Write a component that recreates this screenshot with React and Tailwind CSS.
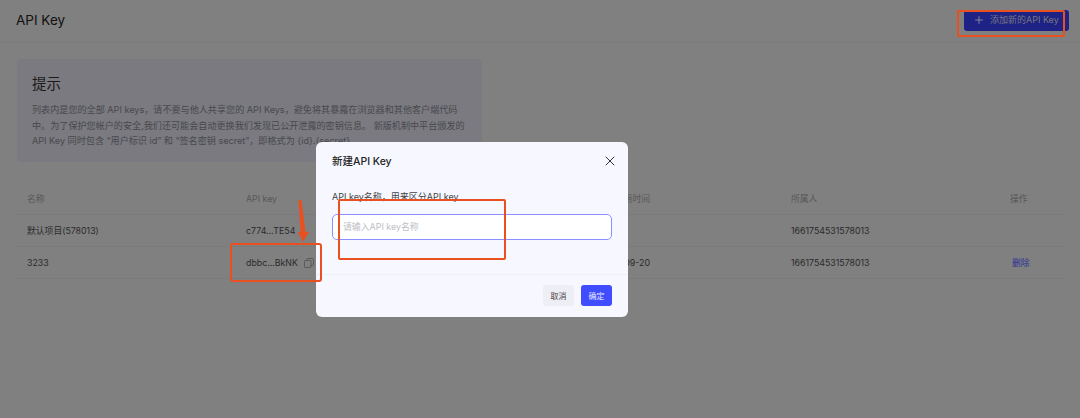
import { Plus, X } from 'lucide-react';

const font = 'font-["Inter","Noto_Sans_CJK_SC",sans-serif]';

const rows = [
  { name: '默认项目(578013)', apiKey: 'c774...TE54', time: '', owner: '1661754531578013' },
  { name: '3233', apiKey: 'dbbc...BkNK', time: '2023-09-20', owner: '1661754531578013', canDelete: true, copy: true },
];

const gridCols = 'grid grid-cols-[219px_350px_195px_219px_1fr] items-center pl-[10px]';

const CopyIcon = () => (
  <svg width="10" height="10" viewBox="0 0 10 10" fill="none" stroke="#505050" strokeWidth="0.8">
    <rect x="0.5" y="2.5" width="6.5" height="7" rx="0.8" />
    <path d="M3 2.5 V1.3 Q3 0.5 3.8 0.5 H8.7 Q9.5 0.5 9.5 1.3 V6.7 Q9.5 7.5 8.7 7.5 H7" />
  </svg>
);

const App = () => {
  return (
    <div className={`relative h-[418px] w-[1080px] overflow-hidden bg-[#808080] ${font}`}>
      {/* Header */}
      <div className="flex h-[43px] items-center justify-between border-b border-[#7b7b7b] pl-[16px] pr-[11px]">
        <h1 className="text-[13.5px] leading-none text-[#111111]">API Key</h1>
        <button className="mb-[2px] flex h-[21px] w-[105px] items-center gap-[5px] rounded-[3px] bg-[#1e2284] pl-[9px] text-[9px] text-[#77777f]">
          <Plus className="h-[12px] w-[12px] text-[#a0a0a8]" strokeWidth={1.5} />
          <span>添加新的API Key</span>
        </button>
      </div>

      {/* Hint */}
      <div className="ml-[17px] mt-[16px] h-[103px] w-[465px] rounded-[4px] bg-[#7a7a80] pl-[15px] pt-[15px]">
        <h2 className="text-[14.5px] leading-[20px] text-[#1a1a1a]">提示</h2>
        <p className="mt-[8px] w-[433px] text-[9.1px] leading-[15.5px] text-[#48484c]">
          列表内是您的全部 API keys，请不要与他人共享您的 API Keys，避免将其暴露在浏览器和其他客户端代码中。为了保护您帐户的安全,我们还可能会自动更换我们发现已公开泄露的密钥信息。 新版机制中平台颁发的 API Key 同时包含 “用户标识 id” 和 “签名密钥 secret”，即格式为 {'{id}.{secret}'} 。
        </p>
      </div>

      {/* Table */}
      <div className="mx-[17px] mt-[22px] text-[8.8px]">
        <div className={`${gridCols} h-[31px] border-b border-[#7b7b7b] text-[#575757]`}>
          <span>名称</span>
          <span>API key</span>
          <span className="w-[54px] text-right">最近使用时间</span>
          <span>所属人</span>
          <span>操作</span>
        </div>
        {rows.map((row) => (
          <div key={row.apiKey} className={`${gridCols} h-[32px] border-b border-[#7b7b7b] text-[#2b2b2b]`}>
            <span>{row.name}</span>
            <span className="flex items-center gap-[6px]">
              {row.apiKey}
              {row.copy && <CopyIcon />}
            </span>
            <span className="w-[54px] text-right">{row.time}</span>
            <span>{row.owner}</span>
            <span className="pl-[2px] text-[#2a2f96]">{row.canDelete ? '删除' : ''}</span>
          </div>
        ))}
      </div>

      {/* Modal */}
      <div className="absolute left-[316px] top-[142px] flex h-[175px] w-[312px] flex-col rounded-[6px] bg-[#f6f7ff]">
        <div className="flex items-start justify-between pl-[16px] pr-[10px] pt-[11px]">
          <h3 className="mt-[2px] text-[10.5px] font-medium leading-[14px] text-[#222222]">新建API Key</h3>
          <X className="h-[16px] w-[16px] text-[#333333]" strokeWidth={1.5} />
        </div>
        <p className="ml-[16px] mt-[21px] text-[9px] leading-[14px] text-[#444444]">API key名称，用来区分API key</p>
        <div className="ml-[16px] mt-[10px] flex h-[26px] w-[280px] items-center rounded-[5px] border border-[#8a90ff] bg-white pl-[10px] text-[8.9px] text-[#bdbdc4]">
          请输入API key名称
        </div>
        <div className="mt-[34px] flex flex-1 items-start justify-end gap-[7px] border-t border-[#eeeff7] pr-[16px] pt-[10px]">
          <button className="h-[21px] w-[31px] rounded-[3px] bg-[#eeeef5] text-[8px] text-[#444444]">取消</button>
          <button className="h-[21px] w-[31px] rounded-[3px] bg-[#3f4dff] text-[8px] text-[#e8e9ff]">确定</button>
        </div>
      </div>

      {/* Red annotations */}
      <div className="absolute left-[957px] top-[10px] h-[27px] w-[108px] rounded-[2px] border-2 border-[#e8501f]" />
      <div className="absolute left-[338px] top-[199px] h-[61px] w-[168px] rounded-[2px] border-2 border-[#e8501f]" />
      <div className="absolute left-[230px] top-[243px] h-[39px] w-[92px] rounded-[3px] border-2 border-[#e8501f]" />
      <svg className="absolute left-[295px] top-[199px]" width="16" height="44" viewBox="0 0 16 44">
        <path d="M3.5 1 L6.5 1 L10.5 33 L14 33 L8 43 L3 33 L5.5 33 Z" fill="#e8501f" />
      </svg>
    </div>
  );
};

export default App;
